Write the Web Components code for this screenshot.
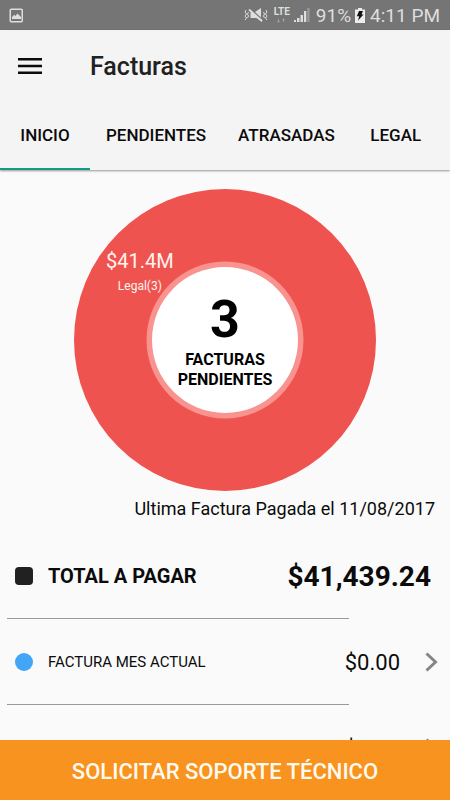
<!DOCTYPE html>
<html lang="es">
<head>
<meta charset="utf-8">
<meta name="viewport" content="width=device-width, initial-scale=1">
<title>Facturas</title>
<style>
  body {
    margin: 0;
    background: #fafafa;
    color: #0b0b0b;
    font-family: Roboto, "Liberation Sans", sans-serif;
  }
</style>
</head>
<body>
<facturas-app></facturas-app>

<script>
const define = (name, html) => {
  const template = document.createElement('template');
  template.innerHTML = html;

  customElements.define(name, class extends HTMLElement {
    constructor() {
      super();
      this.attachShadow({ mode: 'open' });
      this.shadowRoot.appendChild(template.content.cloneNode(true));
    }
  });
};

define('status-bar', `
  <style>
    :host {
      display: flex;
      align-items: center;
      height: 30px;
      padding: 0 10px 0 9px;
      background: #757575;
      color: #dedede;
      font-size: 19px;
    }
    svg { display: block; flex: none; }
    .spacer { flex: 1; }
    .network {
      display: flex;
      flex-direction: column;
      align-items: center;
      margin: 0 4px 0 6px;
      font-size: 10px;
      line-height: 10px;
      font-weight: 700;
    }
    .battery { margin: 0 5px 0 4px; }
    .percent { margin-left: 6px; }
  </style>
  <svg width="15" height="15" viewBox="0 0 15 15" fill="none" stroke="#dedede" stroke-width="1.5">
    <rect x="1.25" y="1.25" width="12" height="12.5" rx="1"/>
    <path d="M3 11V9l2.2-2.2L6.500 8l2-2.500L12 9v2z" fill="#dedede" stroke="none"/>
  </svg>
  <span class="spacer"></span>
  <svg width="24" height="16" viewBox="0 0 24 16" fill="none" stroke="#dedede">
    <path d="M2 3l-1 2 1.500 2L1 9l1.500 2L1 13M4.500 5l-1 2 1 2-1 2M22 3l1 2-1.500 2L23 9l-1.500 2 1.500 2M19.500 5l1 2-1 2 1 2" stroke-width="1"/>
    <path d="M6.500 5.500h2l9.500 8V15l-5.500-4H6.500zM11 5l6-4v9.500z" fill="#dedede" stroke="none"/>
    <path d="M5 2.500l13 11.500" stroke-width="1.800"/>
  </svg>
  <span class="network">LTE
    <svg width="9" height="6" viewBox="0 0 9 6" fill="#a0a0a0"><path d="M1 2h1v2h1L1.500 6 0 4h1zM6 5V3H5l1.500-2L8 3H7v2z"/></svg>
  </span>
  <svg width="16" height="16" viewBox="0 0 16 16" fill="#dedede">
    <path d="M0 13h2v2H0zM3 11h2.500v4H3zM6.500 8H9v7H6.500zM10 4h2.300v11H10z"/>
    <path d="M13.300 1H15.500v14h-2.200z" fill="#9b9b9b"/>
  </svg>
  <span class="percent">91%</span>
  <svg class="battery" width="10" height="15" viewBox="0 0 10 15">
    <path d="M3 0h4v1.500h3V15H0V1.500h3z" fill="#ececec"/>
    <path d="M4 3h4L6.500 6.500h2L3 12.500l1.200-4.300H1.800z" fill="#111"/>
  </svg>
  <span>4:11 PM</span>
`);

define('app-bar', `
  <style>
    :host {
      display: block;
      position: relative;
      background: #f4f4f4;
      box-shadow: 0 1px 2px rgba(0, 0, 0, .4);
    }
    .title {
      display: flex;
      align-items: center;
      gap: 48px;
      height: 72px;
      padding-left: 18px;
    }
    button {
      padding: 0;
      border: 0;
      background: none;
    }
    svg { display: block; }
    h1 {
      margin: 0;
      color: #212121;
      font-size: 25px;
      font-weight: 500;
    }
  </style>
  <div class="title">
    <button aria-label="Menu">
      <svg width="24" height="16" viewBox="0 0 24 16" fill="#0b0b0b">
        <path d="M0 0h24v2.500H0zM0 6.750h24v2.500H0zM0 13.500h24V16H0z"/>
      </svg>
    </button>
    <h1><slot name="title"></slot></h1>
  </div>
  <slot></slot>
`);

define('tab-bar', `
  <style>
    :host {
      display: flex;
      height: 68px;
    }
    ::slotted(a) {
      display: flex;
      align-items: center;
      justify-content: center;
      box-sizing: border-box;
      min-width: 90px;
      padding: 0 16px;
      border-bottom: 2px solid transparent;
      color: #0b0b0b;
      font-size: 17px;
      font-weight: 500;
      text-decoration: none;
    }
    ::slotted(a[aria-current]) { border-color: #129a83; }
  </style>
  <slot></slot>
`);

define('donut-chart', `
  <style>
    :host {
      display: grid;
      position: relative;
      width: 302px;
      margin: 19px auto 0;
      place-items: center;
    }
    svg, .center { grid-area: 1 / 1; }
    svg { display: block; width: 100%; }
    .center {
      color: #000;
      font-size: 16px;
      line-height: 20px;
      font-weight: 700;
      text-align: center;
    }
    .slice {
      position: absolute;
      left: 32px;
      top: 60px;
      color: #fff4ee;
      font-size: 12px;
      line-height: 25px;
      text-align: center;
    }
    ::slotted([slot="count"]) {
      display: block;
      font-size: 52px;
      line-height: 60px;
    }
    ::slotted([slot="value"]) {
      display: block;
      font-size: 20px;
    }
  </style>
  <svg viewBox="0 0 302 302">
    <circle cx="151" cy="151" r="151" fill="#ef5350"/>
    <circle cx="151" cy="151" r="78.500" fill="#f8938f"/>
    <circle cx="151" cy="151" r="73" fill="#fff"/>
  </svg>
  <div class="center"><slot name="count"></slot><slot></slot></div>
  <div class="slice"><slot name="value"></slot><slot name="label"></slot></div>
`);

define('invoice-row', `
  <style>
    :host {
      display: block;
      height: 86px;
      font-size: 15px;
    }
    .row {
      display: flex;
      align-items: center;
      height: 86px;
      padding: 0 12px 0 15px;
    }
    .marker {
      width: 18px;
      height: 18px;
      margin-right: 15px;
      border-radius: 50%;
      background: var(--marker, transparent);
    }
    .label { flex: 1; }
    .amount {
      margin-right: 25px;
      font-size: 22px;
    }
    hr {
      width: 76%;
      margin: -1px 7px 0;
      border: 0;
      border-top: 1px solid #999;
    }
    svg { display: block; }
    :host([total]) {
      font-size: 20px;
      font-weight: 700;
    }
    :host([total]) .marker { border-radius: 4px; }
    :host([total]) svg { display: none; }
    :host([total]) .amount {
      margin-right: 7px;
      font-size: 28px;
    }
  </style>
  <div class="row">
    <span class="marker"></span>
    <span class="label"><slot></slot></span>
    <span class="amount"><slot name="amount"></slot></span>
    <svg width="13" height="20" viewBox="0 0 13 20" fill="none" stroke="#858585" stroke-width="3">
      <path d="M1.500 1.500L10.500 10l-9 8.500"/>
    </svg>
  </div>
  <hr>
`);

define('support-button', `
  <style>
    :host { display: block; }
    button {
      display: block;
      width: 100%;
      height: 60px;
      padding: 2px 0 0;
      border: 0;
      background: #f7931e;
      color: #fffaf0;
      font: 500 22px Roboto, "Liberation Sans", sans-serif;
    }
  </style>
  <button><slot></slot></button>
`);

define('facturas-app', `
  <style>
    :host {
      display: flex;
      flex-direction: column;
      height: 100vh;
    }
    main {
      flex: 1;
      min-height: 0;
      overflow: hidden;
    }
    .last-paid {
      margin: 6px 15px 12px;
      font-size: 18px;
      line-height: 24px;
      text-align: right;
    }
  </style>
  <status-bar></status-bar>
  <app-bar>
    <span slot="title">Facturas</span>
    <tab-bar>
      <a href="#inicio" aria-current="page">INICIO</a>
      <a href="#pendientes">PENDIENTES</a>
      <a href="#atrasadas">ATRASADAS</a>
      <a href="#legal">LEGAL</a>
    </tab-bar>
  </app-bar>
  <main>
    <donut-chart>
      <span slot="value">$41.4M</span>
      <span slot="label">Legal(3)</span>
      <span slot="count">3</span>
      FACTURAS<br>PENDIENTES
    </donut-chart>
    <p class="last-paid">Ultima Factura Pagada el 11/08/2017</p>
    <invoice-row total style="--marker: #212121">
      TOTAL A PAGAR
      <span slot="amount">$41,439.24</span>
    </invoice-row>
    <invoice-row style="--marker: #42a5f5">
      FACTURA MES ACTUAL
      <span slot="amount">$0.00</span>
    </invoice-row>
    <invoice-row>
      <span slot="amount">$0.00</span>
    </invoice-row>
  </main>
  <support-button>SOLICITAR SOPORTE TÉCNICO</support-button>
`);
</script>
</body>
</html>
